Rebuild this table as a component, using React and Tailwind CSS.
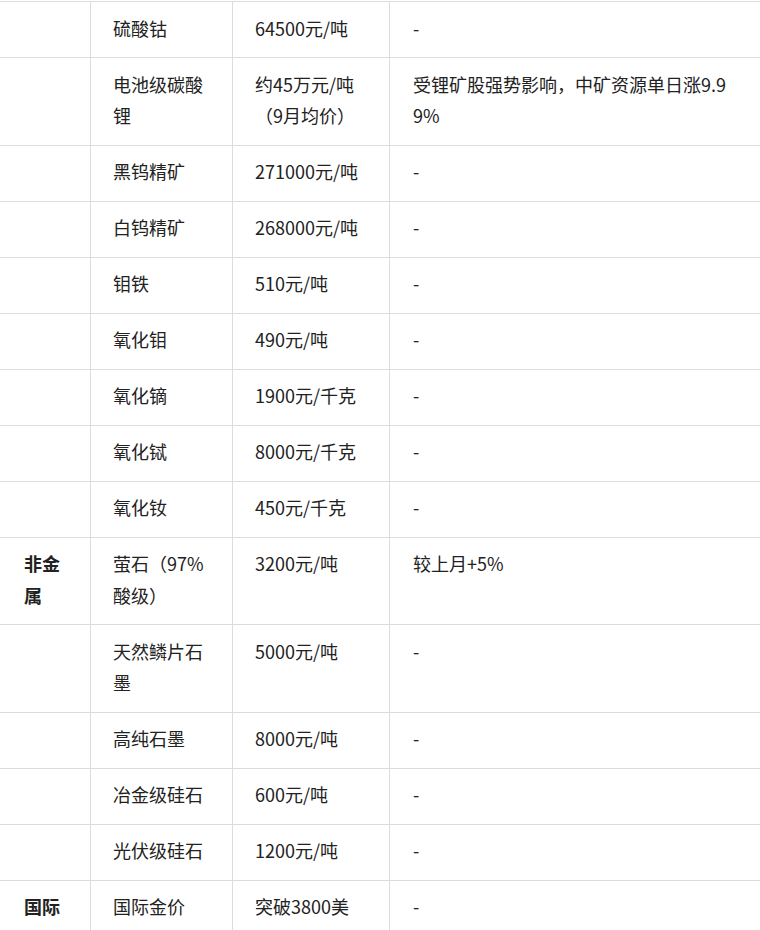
import React from "react";

const rows = [
  ["", "硫酸钴", "64500元/吨", "-"],
  ["", "电池级碳酸锂", "约45万元/吨（9月均价）", "受锂矿股强势影响，中矿资源单日涨9.99%"],
  ["", "黑钨精矿", "271000元/吨", "-"],
  ["", "白钨精矿", "268000元/吨", "-"],
  ["", "钼铁", "510元/吨", "-"],
  ["", "氧化钼", "490元/吨", "-"],
  ["", "氧化镝", "1900元/千克", "-"],
  ["", "氧化铽", "8000元/千克", "-"],
  ["", "氧化钕", "450元/千克", "-"],
  ["非金属", "萤石（97%酸级）", "3200元/吨", "较上月+5%"],
  ["", "天然鳞片石墨", "5000元/吨", "-"],
  ["", "高纯石墨", "8000元/吨", "-"],
  ["", "冶金级硅石", "600元/吨", "-"],
  ["", "光伏级硅石", "1200元/吨", "-"],
  ["国际", "国际金价", "突破3800美", "-"],
];

export default function App() {
  return (
    <div className="w-[760px] h-[930px] overflow-hidden bg-white">
      <table
        className="mt-px ml-[-1px] w-[764px] border-collapse table-fixed text-[18px] leading-[31.5px] text-[#222]"
        style={{ fontFamily: '"Noto Sans CJK SC", "Noto Sans", sans-serif' }}
      >
        <colgroup>
          <col className="w-[91px]" />
          <col className="w-[142px]" />
          <col className="w-[157px]" />
          <col className="w-[374px]" />
        </colgroup>
        <tbody>
          {rows.map((r, i) => (
            <tr key={i}>
              <td className="border border-[#dcdcdc] align-top pl-[24px] pr-[21px] pt-[10.5px] pb-[13px] font-bold break-all">
                {r[0]}
              </td>
              <td className="border border-[#dcdcdc] align-top pl-[22px] pr-[22px] pt-[10.5px] pb-[13px] break-all">
                {r[1]}
              </td>
              <td className="border border-[#dcdcdc] align-top pl-[22px] pr-[22px] pt-[10.5px] pb-[13px] break-all">
                {r[2]}
              </td>
              <td className="border border-[#dcdcdc] align-top pl-[23px] pr-[27px] pt-[10.5px] pb-[13px] break-all">
                {r[3]}
              </td>
            </tr>
          ))}
        </tbody>
      </table>
    </div>
  );
}
